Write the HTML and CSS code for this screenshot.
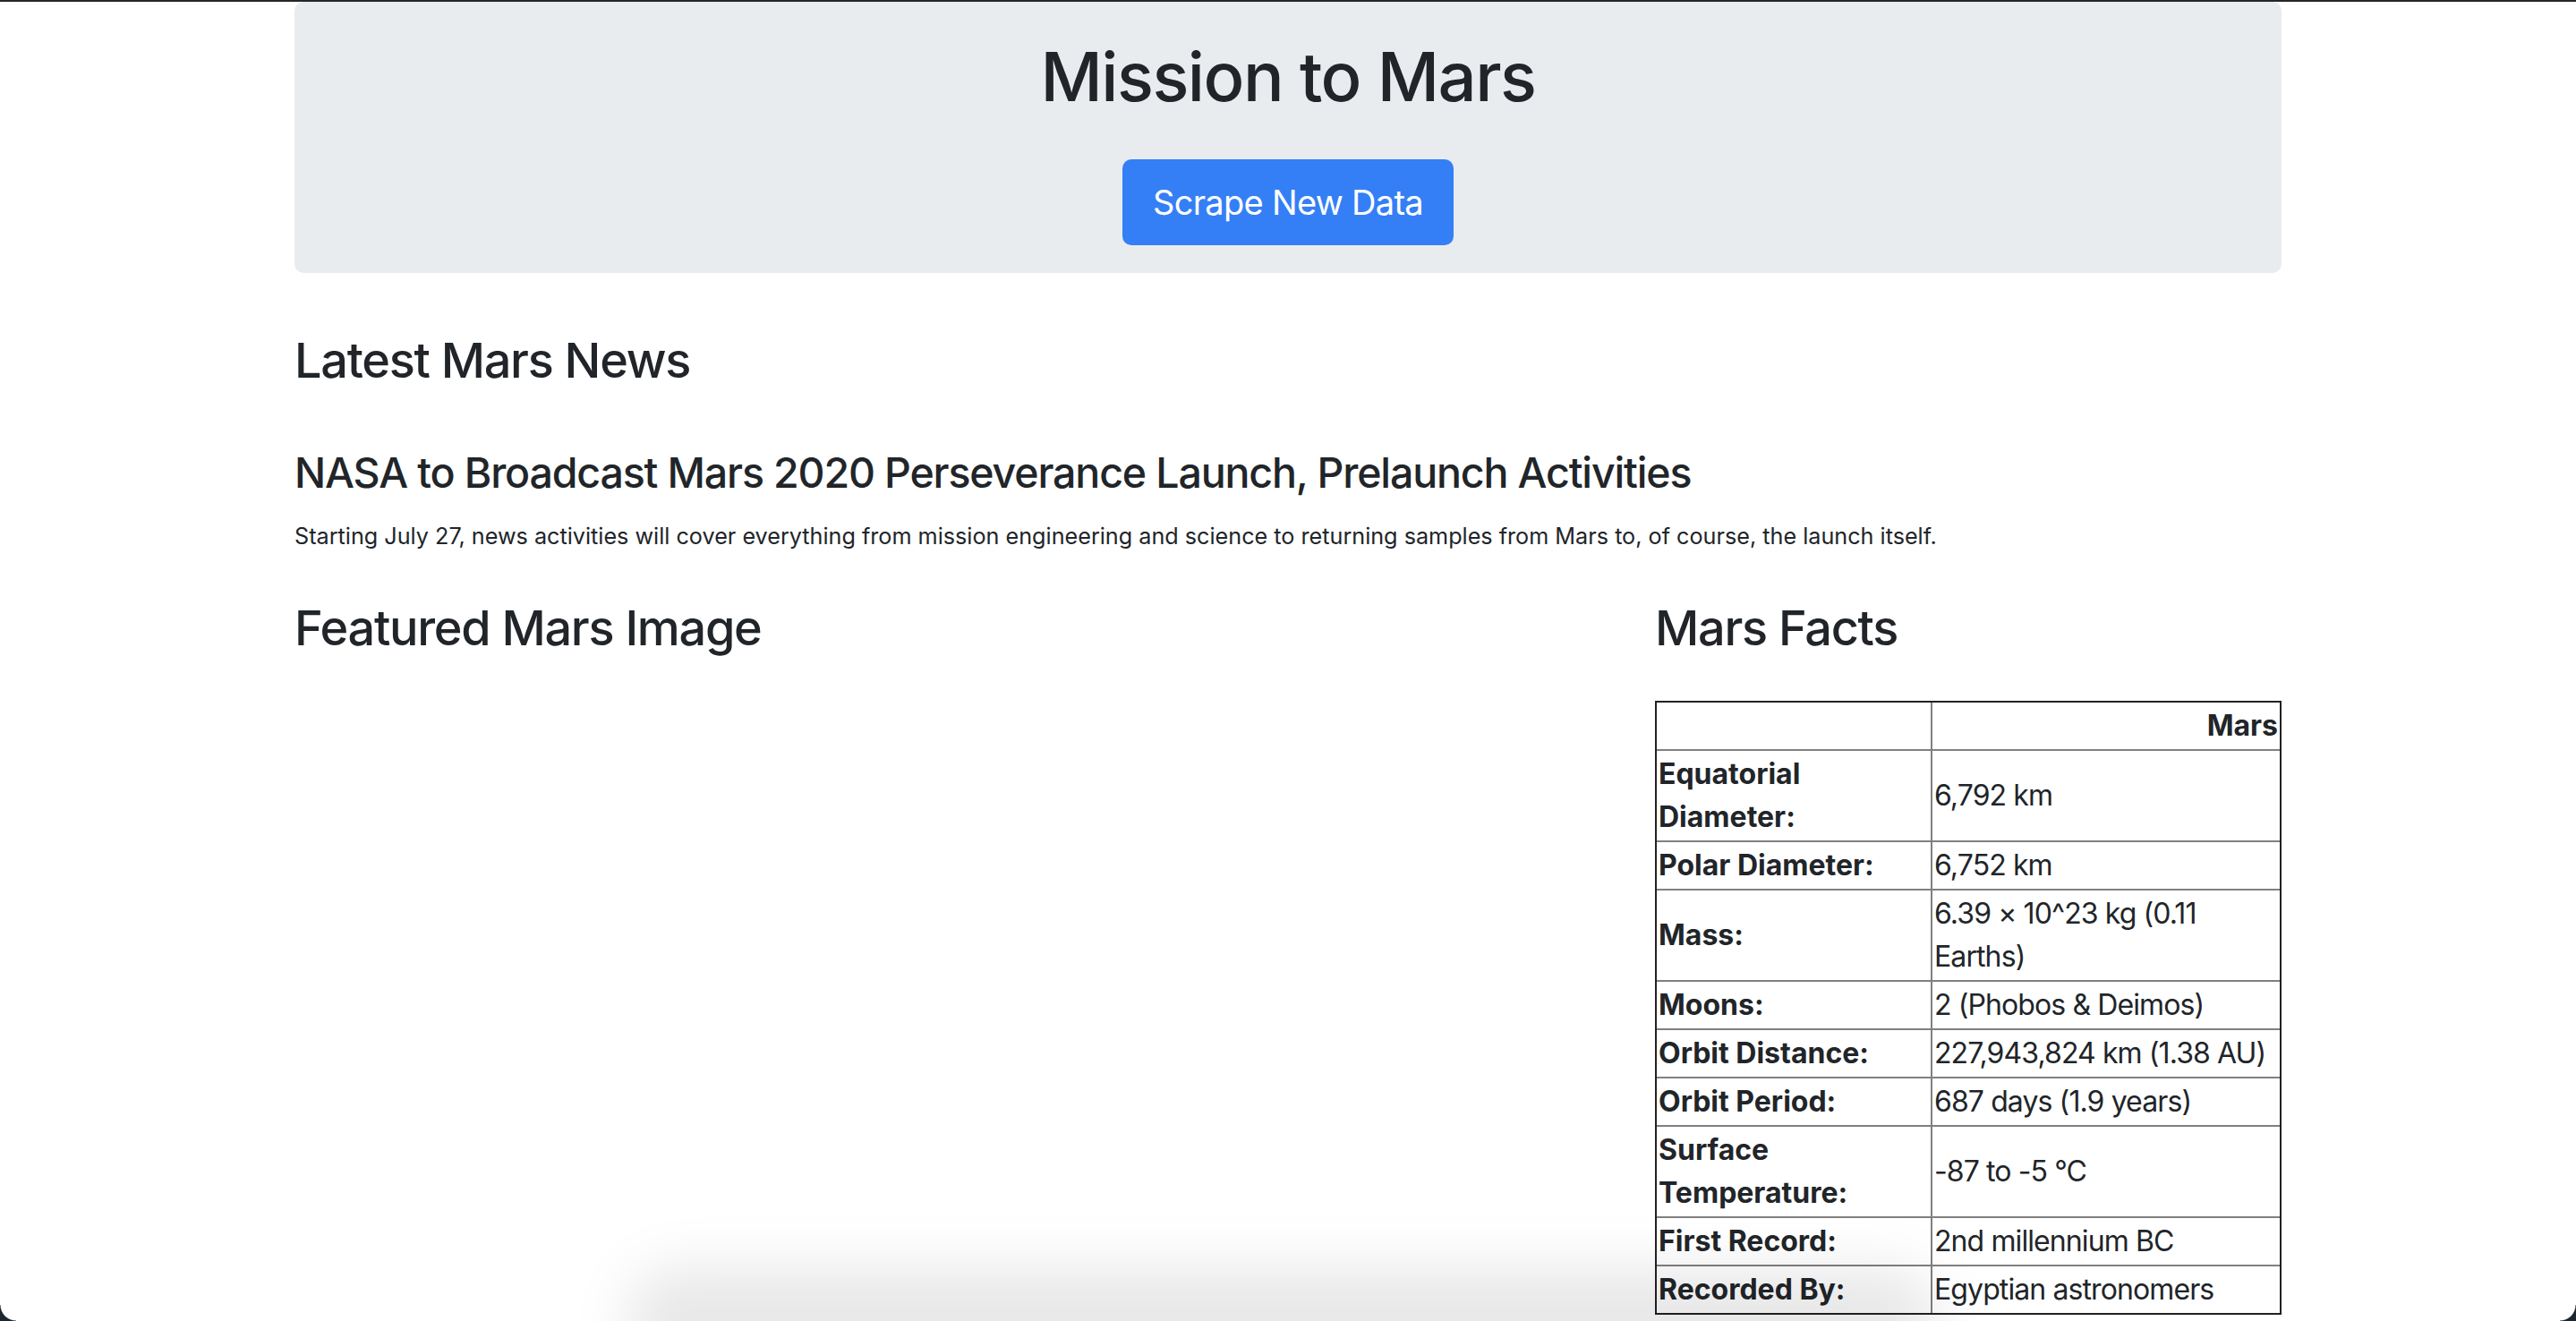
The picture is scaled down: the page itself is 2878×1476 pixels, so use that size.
FILE: index.html
```html
<!DOCTYPE html>
<html lang="en">
<head>
<meta charset="utf-8">
<title>Mission to Mars</title>
<link rel="stylesheet" href="styles.css">
</head>
<body>
<div class="container">
  <div class="jumbotron">
    <h1 class="jumbo-title">Mission to Mars</h1>
    <p class="jumbo-action"><a class="btn-primary" href="#">Scrape New Data</a></p>
  </div>

  <section class="news">
    <h3 class="section-title">Latest Mars News</h3>
    <h4 class="news-title">NASA to Broadcast Mars 2020 Perseverance Launch, Prelaunch Activities</h4>
    <p class="news-teaser">Starting July 27, news activities will cover everything from mission engineering and science to returning samples from Mars to, of course, the launch itself.</p>
  </section>

  <div class="row">
    <div class="col-main">
      <h3 class="section-title">Featured Mars Image</h3>
    </div>
    <div class="col-side">
      <h3 class="section-title facts-title">Mars Facts</h3>
      <table class="facts">
        <colgroup><col class="col-label"><col class="col-value"></colgroup>
        <thead>
          <tr class="head-row"><th></th><th>Mars</th></tr>
        </thead>
        <tbody>
          <tr><th>Equatorial Diameter:</th><td>6,792 km</td></tr>
          <tr><th>Polar Diameter:</th><td>6,752 km</td></tr>
          <tr><th>Mass:</th><td>6.39 × 10^23 kg (0.11 Earths)</td></tr>
          <tr><th>Moons:</th><td>2 (Phobos &amp; Deimos)</td></tr>
          <tr><th>Orbit Distance:</th><td>227,943,824 km (1.38 AU)</td></tr>
          <tr><th>Orbit Period:</th><td>687 days (1.9 years)</td></tr>
          <tr><th>Surface Temperature:</th><td>-87 to -5 °C</td></tr>
          <tr><th>First Record:</th><td>2nd millennium BC</td></tr>
          <tr><th>Recorded By:</th><td>Egyptian astronomers</td></tr>
        </tbody>
      </table>
    </div>
  </div>
</div>
<div class="dock-shadow"></div>
<div class="corner corner-left"></div>
<div class="corner corner-right"></div>
</body>
</html>
```

FILE: styles.css
```css
html {
  border-top: 2px solid #262626;
}
body {
  margin: 0;
  font-family: Inter, "Noto Sans", "Liberation Sans", sans-serif;
  color: #212529;
  background: #fff;
  font-size: 32px;
  line-height: 1.5;
}
.container {
  width: 2220px;
  margin: 0 auto;
}
.jumbotron {
  background: #e9ecef;
  border-radius: 10px;
  padding: 35px 64px 31px;
  text-align: center;
}
.jumbo-title {
  margin: 0 0 45px;
  font-size: 76px;
  font-weight: 500;
  line-height: 96px;
  letter-spacing: -1.5px;
}
.jumbo-action {
  margin: 0;
  height: 96px;
}
.btn-primary {
  display: inline-block;
  box-sizing: border-box;
  height: 96px;
  padding: 16px 32px;
  border: 2px solid #347ff6;
  border-radius: 10px;
  background: #347ff6;
  color: #fff;
  font-size: 38px;
  line-height: 60px;
  text-decoration: none;
  letter-spacing: -0.7px;
}
.news {
  margin-top: 64px;
}
.section-title {
  margin: 0;
  font-size: 54px;
  font-weight: 500;
  line-height: 67px;
  letter-spacing: -1.28px;
}
.news-title {
  margin: 63px 0 0;
  font-size: 46.5px;
  font-weight: 500;
  line-height: 58px;
  letter-spacing: -1.15px;
}
.news-teaser {
  margin: 24px 0 0;
  font-size: 25.2px;
  line-height: 36px;
}
.row {
  display: grid;
  grid-template-columns: 1460px 700px;
  column-gap: 60px;
  margin-top: 51px;
}
.facts-title {
  margin-bottom: 48px;
}
.facts {
  width: 100%;
  table-layout: fixed;
  border-collapse: separate;
  border-spacing: 0;
  border: 2px solid #222;
  font-size: 32px;
  line-height: 48px;
}
.col-label {
  width: 308px;
}
.facts th,
.facts td {
  padding: 2px;
  border-right: 2px solid #808080;
  border-bottom: 2px solid #808080;
  vertical-align: middle;
  text-align: left;
}
.facts th:last-child,
.facts td:last-child {
  border-right: 0;
}
.facts tbody tr:last-child th,
.facts tbody tr:last-child td {
  border-bottom: 0;
}
.facts th {
  font-weight: 700;
}
.facts td {
  font-weight: 400;
  letter-spacing: -0.9px;
}
.head-row th {
  text-align: right;
}
.dock-shadow {
  position: fixed;
  left: 700px;
  width: 1465px;
  bottom: -60px;
  height: 120px;
  border-radius: 60px;
  background: rgba(0, 0, 0, 0.09);
  filter: blur(30px);
  pointer-events: none;
}
.corner {
  position: fixed;
  bottom: 0;
  width: 18px;
  height: 18px;
}
.corner-left {
  left: 0;
  background: radial-gradient(circle at 18px 0, transparent 17px, #1d2630 18px);
}
.corner-right {
  right: 0;
  background: radial-gradient(circle at 0 0, transparent 17px, #1d2630 18px);
}
```
